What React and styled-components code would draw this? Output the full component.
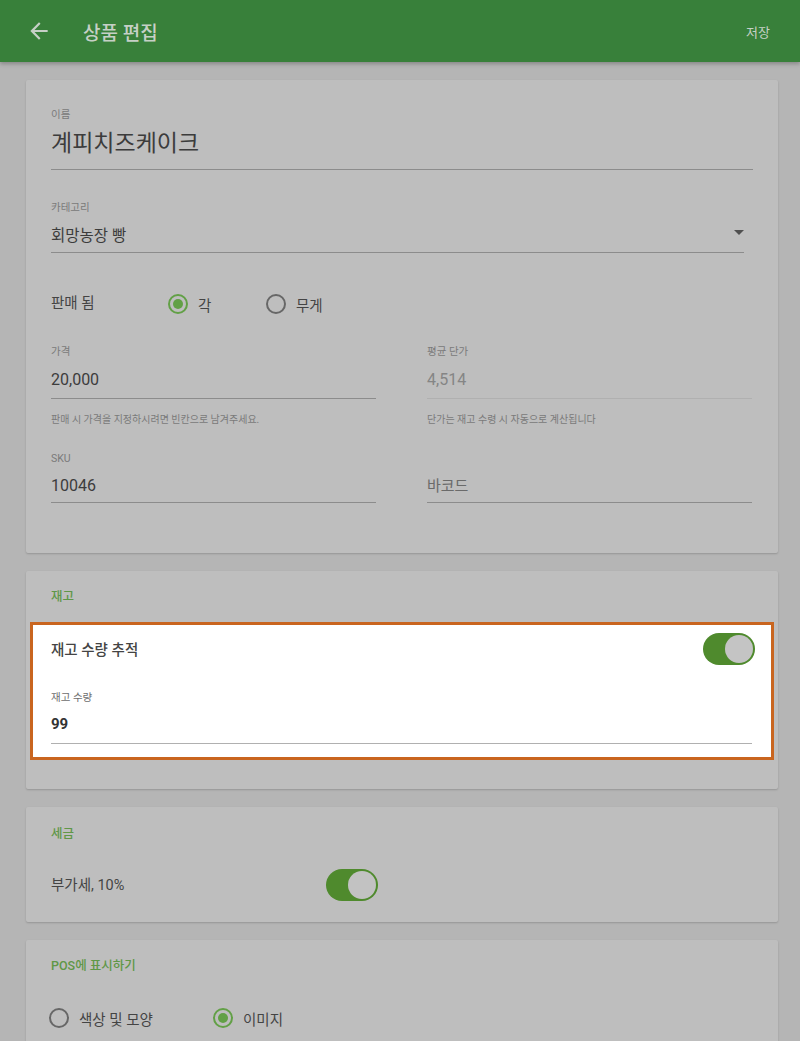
import React from "react";
import styled, { createGlobalStyle } from "styled-components";

const GlobalStyle = createGlobalStyle`
  * { box-sizing: border-box; }
  body {
    margin: 0;
    background: #b5b5b5;
    font-family: Roboto, "Noto Sans CJK KR", sans-serif;
  }
`;

const Header = styled.header`
  position: relative;
  z-index: 1;
  height: 62px;
  display: flex;
  align-items: center;
  padding: 0 30px 0 26px;
  background: #38803a;
  box-shadow: 0 2px 4px rgba(0, 0, 0, 0.25);
`;

const HeaderTitle = styled.div`
  margin-left: 31px;
  font-size: 19px;
  font-weight: 500;
  color: #c6d0c6;
`;

const SaveButton = styled.div`
  margin-left: auto;
  font-size: 13px;
  color: #c6d0c6;
`;

const Main = styled.main`
  display: flex;
  flex-direction: column;
  gap: 18px;
  padding: 18px 22px 40px 26px;
`;

const Card = styled.section`
  background: #bebebe;
  border-radius: 2px;
  box-shadow: 0 1px 2px rgba(0, 0, 0, 0.18);
  padding: ${(p) => p.$pad || "0"};
`;

const SectionTitle = styled.div`
  margin-left: ${(p) => p.$indent || 0}px;
  font-size: 12.5px;
  font-weight: 500;
  line-height: 16px;
  color: #5f9747;
`;

const Field = styled.div`
  margin-top: ${(p) => p.$top || 0}px;
`;

const Label = styled.div`
  font-size: 10.5px;
  line-height: 14px;
  height: 14px;
  color: ${(p) => (p.$light ? "#6e6e6e" : "#7a7a7a")};
`;

const ValueRow = styled.div`
  display: flex;
  align-items: center;
  margin-top: ${(p) => p.$gap ?? 10}px;
  margin-right: ${(p) => p.$right || 0}px;
  padding-bottom: ${(p) => p.$pb ?? 7}px;
  border-bottom: 1px solid ${(p) => (p.$light ? "#b0b0b0" : "#8c8c8c")};
`;

const Value = styled.div`
  flex: 1;
  font-size: ${(p) => p.$size || 15}px;
  line-height: ${(p) => p.$lh || 22}px;
  font-weight: ${(p) => p.$weight || 400};
  color: ${(p) => p.$color || "#3c3c3c"};
`;

const DropArrow = styled.div`
  width: 0;
  height: 0;
  margin-top: -8px;
  border-left: 5px solid transparent;
  border-right: 5px solid transparent;
  border-top: 5px solid #505050;
`;

const RadioRow = styled.div`
  display: flex;
  align-items: center;
  height: 24px;
  margin-top: ${(p) => p.$top || 0}px;
  margin-left: ${(p) => p.$shift || 0}px;
`;

const RowLabel = styled.div`
  width: ${(p) => p.$width}px;
  padding-top: ${(p) => p.$drop || 0}px;
  font-size: 14.5px;
  line-height: 20px;
  color: #444;
  font-weight: ${(p) => p.$weight || 400};
`;

const Option = styled.div`
  display: flex;
  align-items: center;
  gap: 10px;
  width: ${(p) => p.$width || "auto"}px;
  font-size: 14.5px;
  color: #444;
`;

const RadioCircle = styled.div`
  width: 20px;
  height: 20px;
  border-radius: 50%;
  border: 2px solid ${(p) => (p.$on ? "#62a046" : "#676767")};
  display: flex;
  align-items: center;
  justify-content: center;
  &::after {
    content: "";
    width: 10px;
    height: 10px;
    border-radius: 50%;
    background: ${(p) => (p.$on ? "#62a046" : "transparent")};
  }
`;

const Grid = styled.div`
  display: grid;
  grid-template-columns: 325px 325px;
  column-gap: 51px;
  margin-top: 29px;
`;

const Helper = styled.div`
  margin-top: 14px;
  font-size: 10px;
  line-height: 14px;
  color: #7a7a7a;
`;

const Spotlight = styled.div`
  margin-top: 17px;
  background: #fff;
  border: 3px solid #c9651f;
  padding: 8px 19px 13px 18px;
`;

const ToggleRow = styled.div`
  display: flex;
  align-items: center;
  justify-content: ${(p) => (p.$spread ? "space-between" : "flex-start")};
  margin-top: ${(p) => p.$top || 0}px;
`;

const Track = styled.div`
  width: 52px;
  height: 32px;
  border-radius: 16px;
  background: #4f8a2d;
  display: flex;
  align-items: center;
  justify-content: flex-end;
  padding: 0 2px;
  margin-right: ${(p) => p.$mr || 0}px;
`;

const Thumb = styled.div`
  width: 28px;
  height: 28px;
  border-radius: 50%;
  background: ${(p) => p.$color || "#c2c2c2"};
`;

const Radio = ({ on, label, width }) => (
  <Option $width={width}>
    <RadioCircle $on={on} />
    {label}
  </Option>
);

const Toggle = ({ mr, thumb }) => (
  <Track $mr={mr}>
    <Thumb $color={thumb} />
  </Track>
);

function App() {
  return (
    <>
      <GlobalStyle />
      <Header>
        <svg width="26" height="26" viewBox="0 0 24 24" fill="#c6d0c6">
          <path d="M20 11H7.83l5.59-5.59L12 4l-8 8 8 8 1.41-1.41L7.83 13H20v-2z" />
        </svg>
        <HeaderTitle>상품 편집</HeaderTitle>
        <SaveButton>저장</SaveButton>
      </Header>
      <Main>
        <Card $pad="28px 25px 50px">
          <Field>
            <Label>이름</Label>
            <ValueRow $gap={7} $pb={10}>
              <Value $size={23} $lh={30}>계피치즈케이크</Value>
            </ValueRow>
          </Field>
          <Field $top={31}>
            <Label>카테고리</Label>
            <ValueRow $gap={10} $pb={5} $right={9}>
              <Value $size={15.5}>회망농장 빵</Value>
              <DropArrow />
            </ValueRow>
          </Field>
          <RadioRow $top={39}>
            <RowLabel $width={117}>판매 됨</RowLabel>
            <Radio on label="각" width={98} />
            <Radio label="무게" />
          </RadioRow>
          <Grid>
            <Field>
              <Label>가격</Label>
              <ValueRow>
                <Value $size={16}>20,000</Value>
              </ValueRow>
              <Helper>판매 시 가격을 지정하시려면 빈칸으로 남겨주세요.</Helper>
            </Field>
            <Field>
              <Label>평균 단가</Label>
              <ValueRow $light>
                <Value $size={16} $color="#858585">4,514</Value>
              </ValueRow>
              <Helper>단가는 재고 수령 시 자동으로 계산됩니다</Helper>
            </Field>
            <Field $top={25}>
              <Label>SKU</Label>
              <ValueRow $gap={9} $pb={5}>
                <Value $size={16}>10046</Value>
              </ValueRow>
            </Field>
            <Field $top={25}>
              <Label />
              <ValueRow $gap={9} $pb={5}>
                <Value $color="#6a6a6a">바코드</Value>
              </ValueRow>
            </Field>
          </Grid>
        </Card>

        <Card $pad="18px 4px 29px">
          <SectionTitle $indent={21}>재고</SectionTitle>
          <Spotlight>
            <ToggleRow $spread>
              <RowLabel $weight={500} $drop={4}>재고 수량 추적</RowLabel>
              <Toggle mr={-3} thumb="#c4c4c4" />
            </ToggleRow>
            <Field $top={26}>
              <Label $light>재고 수량</Label>
              <ValueRow $gap={8} $pb={8} $light>
                <Value $size={15} $weight={700} $color="#333">99</Value>
              </ValueRow>
            </Field>
          </Spotlight>
        </Card>

        <Card $pad="19px 25px 21px">
          <SectionTitle>세금</SectionTitle>
          <ToggleRow $top={27}>
            <RowLabel $width={275} $drop={2}>부가세, 10%</RowLabel>
            <Toggle />
          </ToggleRow>
        </Card>

        <Card $pad="18px 25px 40px">
          <SectionTitle>POS에 표시하기</SectionTitle>
          <RadioRow $top={32} $shift={-2}>
            <Radio label="색상 및 모양" width={164} />
            <Radio on label="이미지" />
          </RadioRow>
        </Card>
      </Main>
    </>
  );
}

export default App;
